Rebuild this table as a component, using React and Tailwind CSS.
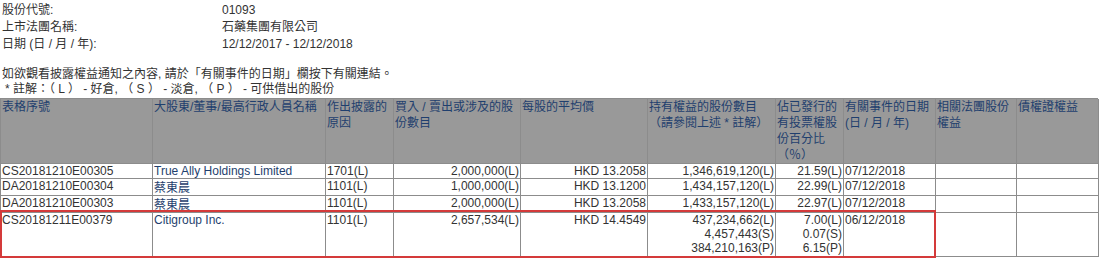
const FONT = "font-['Liberation_Sans','Noto_Sans_CJK_TC',sans-serif]";

const cell = 'border-r border-b border-[#8c8c8c] px-[1px] overflow-hidden';
const head = `${cell} bg-[#999999] text-[#1f3f6e] leading-[16px]`;

const headers = [
  '表格序號',
  '大股東/董事/最高行政人員名稱',
  '作出披露的原因',
  '買入 / 賣出或涉及的股份數目',
  '每股的平均價',
  '持有權益的股份數目（請參閱上述 * 註解）',
  '佔已發行的有投票權股份百分比（％）',
  '有關事件的日期 (日 / 月 / 年)',
  '相關法團股份權益',
  '債權證權益',
];

const rows = [
  {
    id: 'CS20181210E00305',
    name: 'True Ally Holdings Limited',
    reason: '1701(L)',
    shares: '2,000,000(L)',
    price: 'HKD 13.2058',
    hold: ['1,346,619,120(L)'],
    pct: ['21.59(L)'],
    date: '07/12/2018',
  },
  {
    id: 'DA20181210E00304',
    name: '蔡東晨',
    cjk: true,
    reason: '1101(L)',
    shares: '1,000,000(L)',
    price: 'HKD 13.1200',
    hold: ['1,434,157,120(L)'],
    pct: ['22.99(L)'],
    date: '07/12/2018',
  },
  {
    id: 'DA20181210E00303',
    name: '蔡東晨',
    cjk: true,
    reason: '1101(L)',
    shares: '2,000,000(L)',
    price: 'HKD 13.2058',
    hold: ['1,433,157,120(L)'],
    pct: ['22.97(L)'],
    date: '07/12/2018',
  },
  {
    id: 'CS20181211E00379',
    name: 'Citigroup Inc.',
    reason: '1101(L)',
    shares: '2,657,534(L)',
    price: 'HKD 14.4549',
    hold: ['437,234,662(L)', '4,457,443(S)', '384,210,163(P)'],
    pct: ['7.00(L)', '0.07(S)', '6.15(P)'],
    date: '06/12/2018',
  },
];

function InfoLine({ label, value }) {
  return (
    <div className="flex">
      <div className="w-[220px]">{label}</div>
      <div>{value}</div>
    </div>
  );
}

export default function App() {
  return (
    <div className={`${FONT} text-[12px] text-[#333333] bg-white w-[1101px] h-[260px] overflow-hidden`}>
      <div className="pt-[2px] pl-[2px] leading-[17px]">
        <InfoLine label="股份代號:" value="01093" />
        <InfoLine label="上市法團名稱:" value="石藥集團有限公司" />
        <InfoLine label="日期 (日 / 月 / 年):" value="12/12/2017 - 12/12/2018" />
      </div>

      <div className="mt-[14px] pl-[2px] leading-[15px]">
        <div>如欲觀看披露權益通知之內容, 請於「有關事件的日期」欄按下有關連結。</div>
        <div className="pl-[3px]">* 註解：（ L ） - 好倉, （ S ） - 淡倉, （ P ） - 可供借出的股份</div>
      </div>

      <div className="relative mt-[1px]">
        <div className="grid w-[1098px] grid-cols-[152px_173px_68px_127px_127px_128px_68px_92px_81px_82px] grid-rows-[65px_15px_17px_17px_44px] border-l border-t border-[#8c8c8c]">
          {headers.map((h) => (
            <div key={h} className={head}>
              {h}
            </div>
          ))}

          {rows.map((r) => (
            <div key={r.id} className="contents leading-[14px]">
              <div className={cell}>{r.id}</div>
              <div className={`${cell} text-[#1f3f6e] ${r.cjk ? 'pt-[2px]' : ''}`}>{r.name}</div>
              <div className={cell}>{r.reason}</div>
              <div className={`${cell} text-right`}>{r.shares}</div>
              <div className={`${cell} text-right`}>{r.price}</div>
              <div className={`${cell} text-right`}>
                {r.hold.map((v) => (
                  <div key={v}>{v}</div>
                ))}
              </div>
              <div className={`${cell} text-right`}>
                {r.pct.map((v) => (
                  <div key={v}>{v}</div>
                ))}
              </div>
              <div className={cell}>{r.date}</div>
              <div className={cell}></div>
              <div className={cell}></div>
            </div>
          ))}
        </div>

        {/* highlight box drawn over the Citigroup row */}
        <div className="absolute left-0 top-[112px] w-[936px] h-[48px] border-2 border-[#d43a3a] pointer-events-none" />
      </div>
    </div>
  );
}
